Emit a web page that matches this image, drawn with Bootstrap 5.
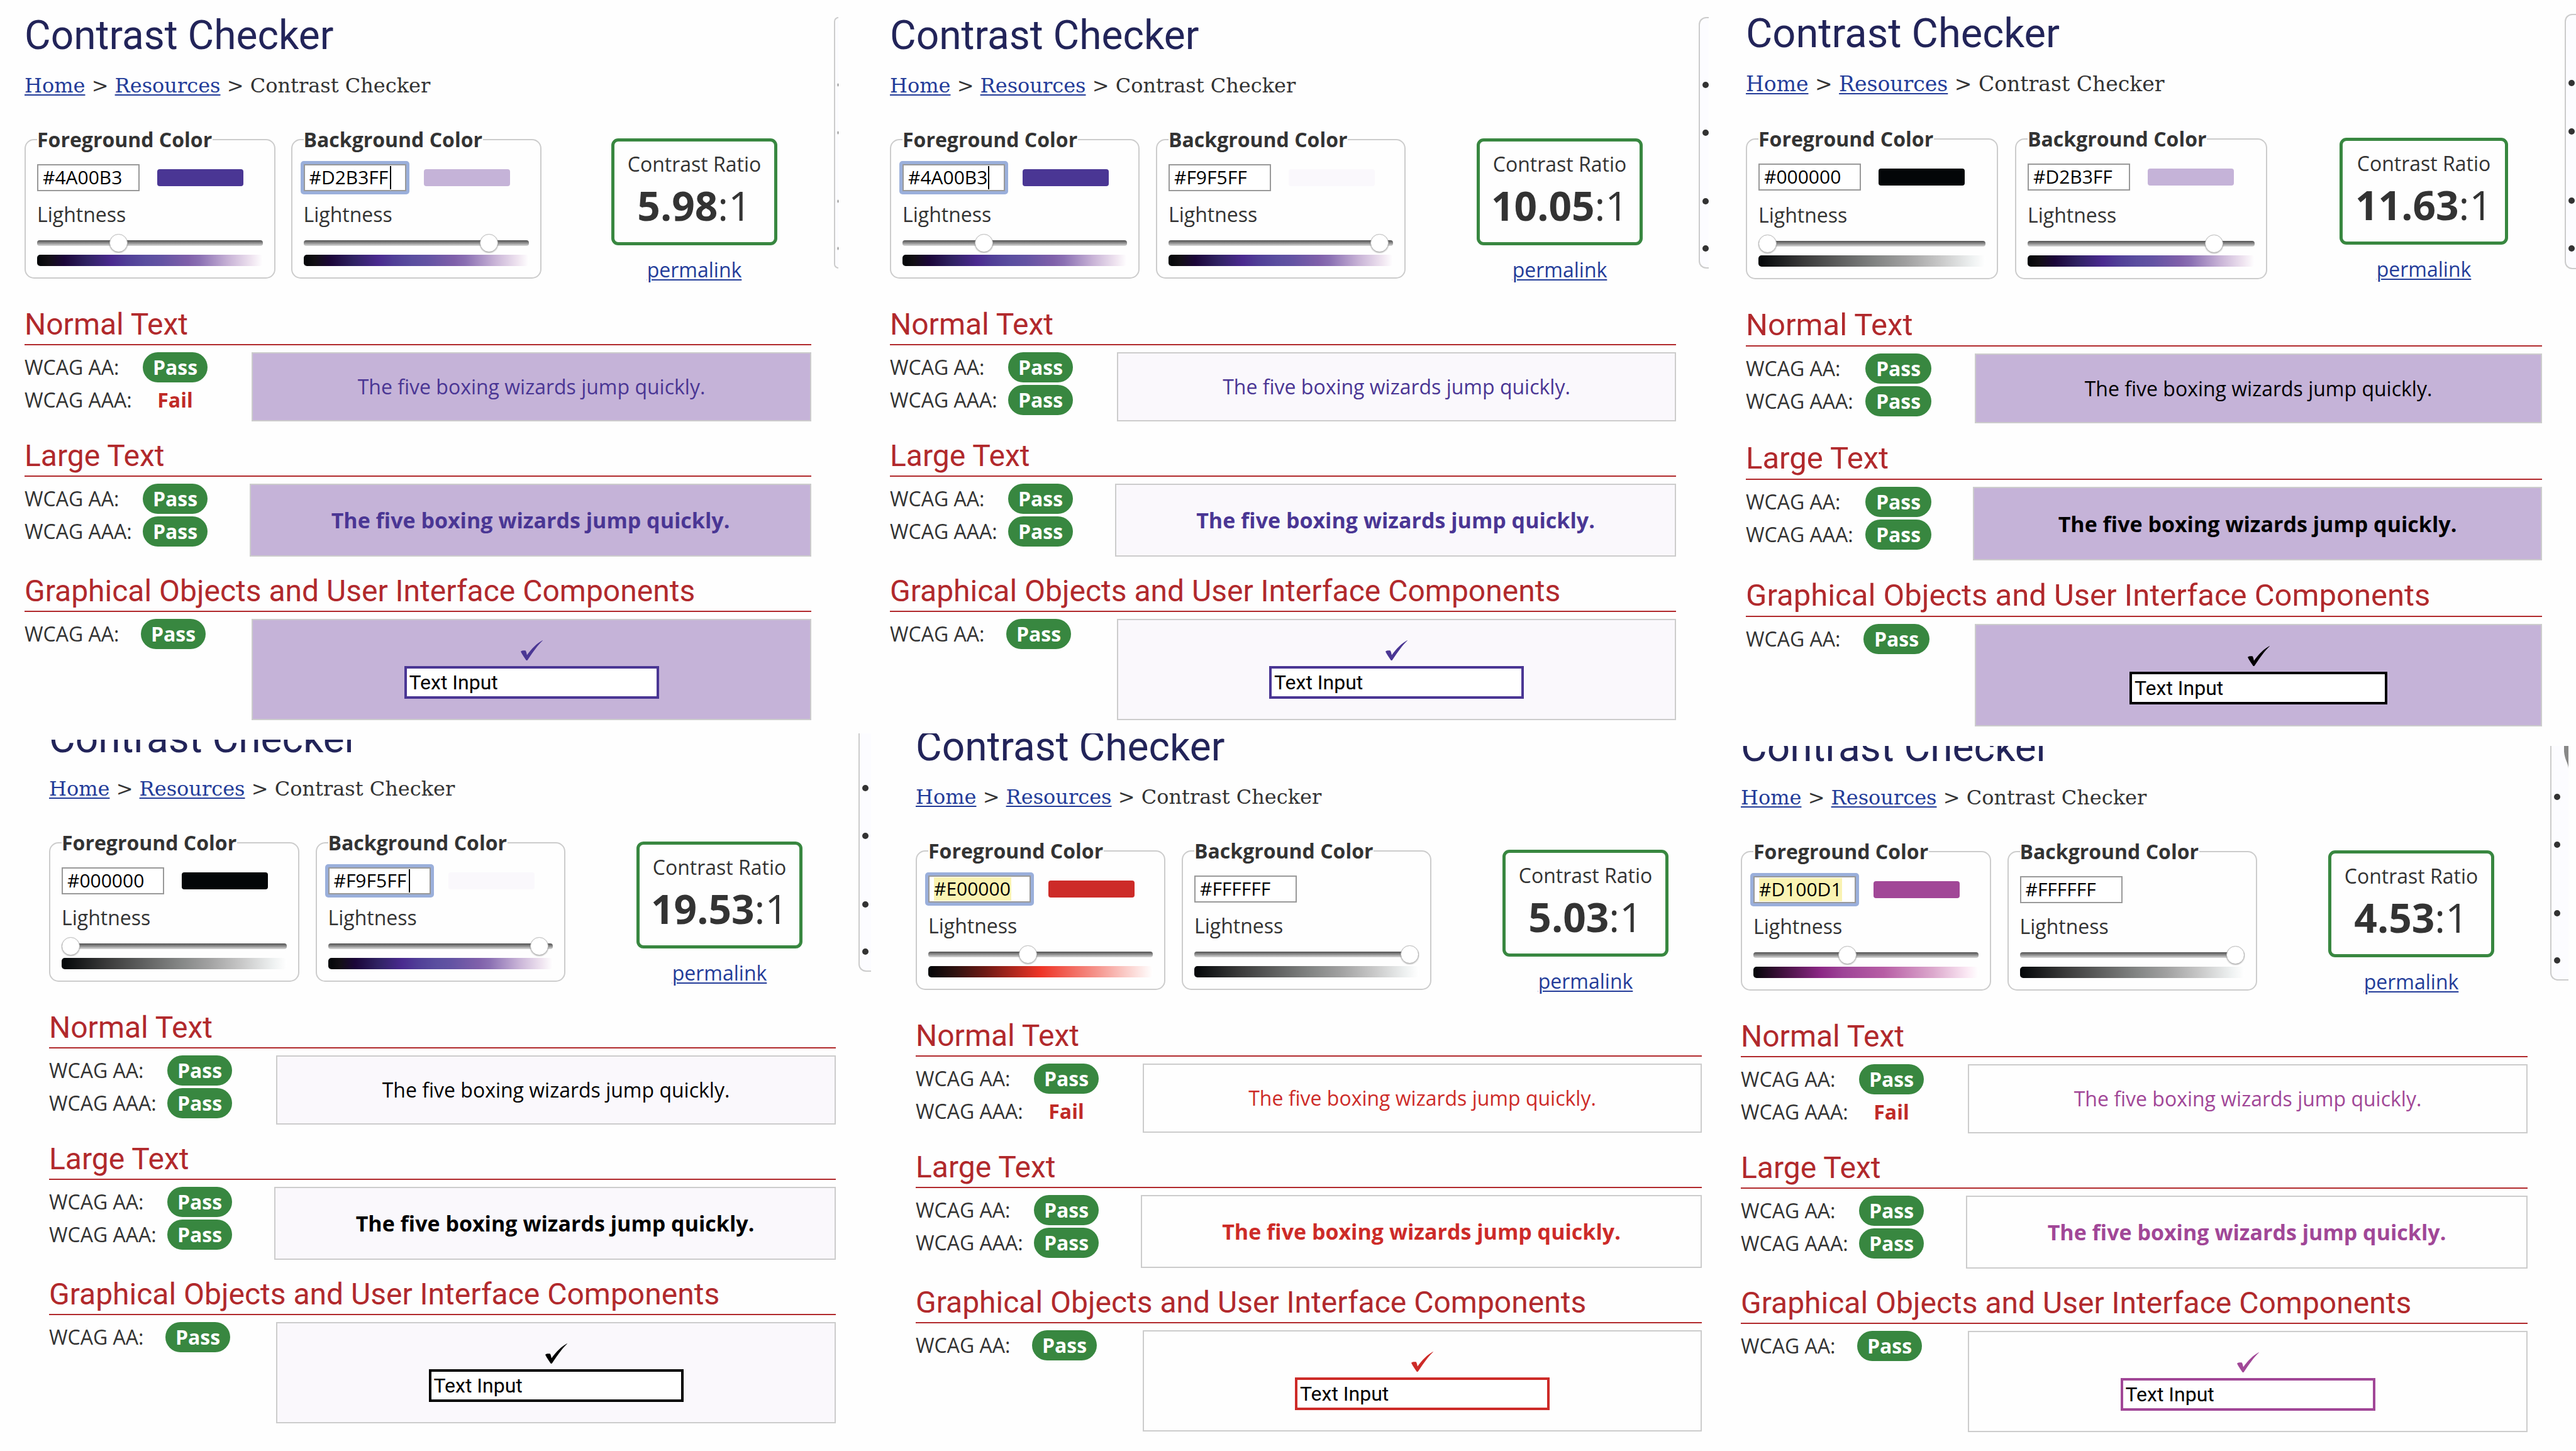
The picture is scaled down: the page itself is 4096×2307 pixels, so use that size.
<!DOCTYPE html>
<html lang="en">
<head>
<meta charset="utf-8">
<meta name="viewport" content="width=device-width, initial-scale=1">
<title>Contrast Checker</title>
<link href="https://cdn.jsdelivr.net/npm/bootstrap@5.3.0/dist/css/bootstrap.min.css" rel="stylesheet">
<style>
  :root {
    --purple: linear-gradient(90deg, #030608, #120f14 5%, #1b0639 12%, #2f2262 22%, #4a2a8f 33%, #503f97 40%, #5a4e9f 48%, #6353a3 55%, #7f60aa 67%, #8b70b3 72%, #c9b4d7 85%, #efe4f0 95%, #fff);
    --gray: linear-gradient(90deg, #030608, #3a3a3a 20%, #838584 52%, #a0a0a0 65%, #c8c8c8 80%, #eef1f1 94%, #fff);
    --red: linear-gradient(90deg, #030608, #2f1210 12%, #6b1914 25%, #ee3426 50%, #f5948c 75%, #fff);
    --magenta: linear-gradient(90deg, #030608, #42113f 13%, #8c2886 30%, #9e4597 40%, #b75ea5 58%, #dca9cd 80%, #fbe9f4 95%, #fff);
  }
  body { font: 32px/44px "Open Sans", "Noto Sans", sans-serif; color: #333; background: #fefefe; overflow-x: hidden; }
  a { color: #233c99; text-decoration-thickness: 2px; text-underline-offset: 3px; }

  .board-top { display: grid; grid-template-columns: 1333fr 1384fr 1379fr; height: 1166px; }
  .board-bottom { display: grid; grid-template-columns: 1385fr 1332fr 1379fr; height: 1141px; }

  .tile {
    --fs-gap: 26px; --ratio-w: 264px; --ratio-left: 87px; --ratio-right: 53px;
    --title: 64px; --crumb: 32px; --sub: 48px; --sub-h: 61px; --crumb-gap: 23px; --field-gap: 44px;
    --light-gap: 15px; --below: 37px; --sect: 27px; --status-w: 361px; --pill-left: 188px; --pill-w: 103px;
    --h-normal: 110px; --h-large: 116px; --h-ui: 161px;
    --dot1: 103px; --dot2: 76px; --dot3: 109px; --dot4: 75px; --aside-h: 400px;
    display: flex; align-items: flex-start; overflow: hidden;
  }
  .tile-wide {
    --fs-gap: 27px; --ratio-w: 268px; --ratio-left: 88px; --ratio-right: 54px;
    --title: 65px; --crumb: 33px; --sub: 49px; --sub-h: 62px; --crumb-gap: 25px; --field-gap: 45px;
    --light-gap: 17px; --below: 39px; --sect: 28px; --status-w: 364px; --pill-left: 190px; --pill-w: 105px;
    --h-normal: 111px; --h-large: 117px; --h-ui: 163px;
    --dot1: 105px; --dot2: 77px; --dot3: 110px; --dot4: 76px; --aside-h: 406px;
  }
  .t1 { padding-left: 39px; --fs-gap: 25px; --ratio-left: 86px; --ratio-right: 54px; --top: 21px; --aside-top: 27px; --aside-w: 7px; }
  .t2 { padding-left: 82px; --top: 21px; --aside-top: 27px; --aside-w: 16px; }
  .t3 { padding-left: 59px; --top: 17px; --aside-top: 22px; --aside-w: 18px; }
  .t4 { padding-left: 78px; --top: -37px; --aside-top: -21px; --aside-w: 20px; }
  .t4 > .checker { margin-top: 10px; }
  .t5 { padding-left: 71px; padding-right: 11px; --top: -14px; }
  .t6 { padding-left: 51px; margin: 20px 12px 0 0; --top: -33px; --aside-top: -27px; --aside-w: 29px; }

  .checker { flex: 1 1 0; min-width: 0; overflow: hidden; }
  .checker h1 { font: 400 var(--title)/72px Roboto, sans-serif; color: #222459; margin: var(--top) 0 var(--crumb-gap); }
  .crumbs { font: var(--crumb)/40px "DejaVu Serif", serif; margin-bottom: var(--field-gap); white-space: nowrap; }

  .controls { display: flex; gap: var(--fs-gap); align-items: flex-start; margin-bottom: var(--below); }
  .picker { flex: 1 1 0; border: 2px solid #ccc; border-radius: 15px; padding: 17px 18px 18px; }
  .picker legend { float: none; width: auto; margin: 0; padding: 0 1px 0 0; font: 700 32px/44px "Open Sans", sans-serif; white-space: nowrap; }
  .hexrow { display: flex; align-items: center; gap: 28px; }
  .hexwrap { position: relative; width: 163px; }
  .hexbox { display: block; width: 100%; height: 43px; padding: 0 0 2px 7px; border: 2px solid #999; border-radius: 0; background: #fff; color: #000; font: 30px/37px "Open Sans", sans-serif; outline: 0; }
  .hexwrap.ring::before { content: ""; position: absolute; inset: -5px; border-radius: 5px; background: #9aafdb; }
  .hexwrap.ring .hexbox { position: relative; }
  .hexbox.picked { background: #fff linear-gradient(#faf3b2, #faf3b2) 7px 1px / var(--pick) 37px no-repeat; }
  .caret { position: absolute; top: 3px; width: 2px; height: 37px; background: #000; }
  .chip { width: 137px; height: 27px; border-radius: 4px; }
  .picker label.lightness { display: block; margin-top: var(--light-gap); }
  .level { display: block; width: 100%; height: 29px; margin: 9px 0 4px; appearance: none; -webkit-appearance: none; background: transparent; }
  .level::-webkit-slider-runnable-track { height: 9px; border-radius: 4px; background: linear-gradient(#505050, #8a8a8a 45%, #dadada); }
  .level::-webkit-slider-thumb { -webkit-appearance: none; width: 29px; height: 29px; margin-top: -10px; border-radius: 50%; background: #fff; border: 1px solid #bbb; box-shadow: 0 1px 2px rgba(0,0,0,.3); }
  .ramp { height: 18px; border-radius: 5px; }

  .verdict { flex: none; width: var(--ratio-w); margin: 20px var(--ratio-right) 0 var(--ratio-left); text-align: center; }
  .verdict-box { border: 5px solid #388740; border-radius: 11px; padding: 14px 0; margin-bottom: 17px; white-space: nowrap; }
  .verdict-num { font-size: 64px; line-height: 88px; }

  .checker h2 { font: 400 var(--sub)/56px Roboto, sans-serif; color: #b1292c; height: var(--sub-h); border-bottom: 2px solid #b1292c; margin: 0 0 11px; white-space: nowrap; }
  .result { display: flex; margin-bottom: var(--sect); }
  .status { width: var(--status-w); flex: none; line-height: 48px; }
  .status dl { display: grid; grid-template-columns: var(--pill-left) var(--pill-w); row-gap: 4px; margin: 0; }
  .status dt { font-weight: 400; white-space: nowrap; }
  .status dd { margin: 0; text-align: center; font-weight: 700; }
  .pass { border-radius: 24px; background: #388740; color: #fff; }
  .fail { color: #c02a26; }
  .sample { flex: 1 1 0; display: flex; flex-direction: column; align-items: center; justify-content: center; border: 2px solid #ccc; height: var(--h-normal); }
  .large .status { margin-right: -3px; }
  .large .sample { height: var(--h-large); font-weight: 700; font-size: 34px; }
  .ui .status dl { grid-template-columns: calc(var(--pill-left) - 3px) var(--pill-w); }
  .ui .sample { height: var(--h-ui); }
  .ui svg { width: 35px; height: 32px; margin-bottom: 9px; fill: currentColor; }
  .demo { width: 405px; height: 52px; border: 4px solid currentColor; border-radius: 0; padding: 0 4px; background: #fff; outline: 0; font: 32px/44px Roboto, sans-serif; color: inherit; -webkit-text-fill-color: #000; }
  .tile-wide .demo { width: 410px; }

  .notes { position: relative; width: var(--aside-w); height: var(--aside-h); margin: var(--aside-top) 0 0 36px; overflow: hidden; border: 2px solid #ccc; border-right: 0; border-radius: 12px 0 0 12px; background: #fcfcff; }
  .notes ul { list-style: none; margin: 0; padding: calc(var(--dot1) - 2px) 0 0 4px; }
  .notes li { height: var(--dot2); }
  .notes li:nth-child(2) { height: var(--dot3); }
  .notes li:nth-child(3) { height: var(--dot4); }
  .notes li::before { content: ""; display: block; width: 10px; height: 10px; border-radius: 50%; background: #333; }
  .notes svg { position: absolute; right: 0; top: 25px; width: 7px; height: 36px; }
</style>
</head>
<body>
<main>
  <div class="board-top" id="top"></div>
  <div class="board-bottom" id="bottom"></div>
</main>
<script src="https://cdn.jsdelivr.net/npm/bootstrap@5.3.0/dist/js/bootstrap.bundle.min.js"></script>
<script>
  const shades = {
    '#4A00B3': { paint: '#4a3694', ramp: 'purple', level: 35, caret: 136 },
    '#D2B3FF': { paint: '#c5b3d8', ramp: 'purple', level: 85, caret: 137 },
    '#F9F5FF': { paint: '#faf8fc', ramp: 'purple', level: 98, caret: 128 },
    '#000000': { paint: '#030608', ramp: 'gray', level: 0 },
    '#FFFFFF': { paint: '#fefefe', ramp: 'gray', level: 100 },
    '#E00000': { paint: '#cd2b28', ramp: 'red', level: 44, pick: 123 },
    '#D100D1': { paint: '#a14797', ramp: 'magenta', level: 41, pick: 132 }
  };
  const panels = [
    { fg: '#4A00B3', bg: '#D2B3FF', ratio: '5.98', active: 'bg', aaa: false },
    { fg: '#4A00B3', bg: '#F9F5FF', ratio: '10.05', active: 'fg', aaa: true },
    { fg: '#000000', bg: '#D2B3FF', ratio: '11.63', aaa: true },
    { fg: '#000000', bg: '#F9F5FF', ratio: '19.53', active: 'bg', aaa: true },
    { fg: '#E00000', bg: '#FFFFFF', ratio: '5.03', active: 'fg', aaa: false },
    { fg: '#D100D1', bg: '#FFFFFF', ratio: '4.53', active: 'fg', aaa: false }
  ];
  const verdict = ok => `<dd class="${ok ? 'pass' : 'fail'}">${ok ? 'Pass' : 'Fail'}</dd>`;
  const picker = (name, key, hex, active, n) => {
    const s = shades[hex];
    return `<fieldset class="picker">
      <legend><label for="${key}${n}">${name} Color</label></legend>
      <div class="hexrow">
        <div class="hexwrap ${active ? 'ring' : ''}">
          <input class="hexbox ${active && s.pick ? 'picked' : ''}" type="text" id="${key}${n}" value="${hex}" ${active && s.pick ? `style="--pick:${s.pick}px"` : ''}>
          ${active && s.caret ? `<span class="caret" style="left:${s.caret}px"></span>` : ''}
        </div>
        <div class="chip" style="background:${s.paint}"></div>
      </div>
      <label class="lightness" for="${key}l${n}">Lightness</label>
      <input class="level" type="range" id="${key}l${n}" min="0" max="100" value="${s.level}">
      <div class="ramp" style="background:var(--${s.ramp})"></div>
    </fieldset>`;
  };
  panels.forEach((p, i) => {
    const n = i + 1, ink = p.fg === '#000000' ? '#000' : shades[p.fg].paint;
    const colors = `style="color:${ink};background:${shades[p.bg].paint}"`;
    const html = `<section class="tile ${n === 3 ? 'tile-wide' : ''} t${n}">
      <div class="checker">
        <h1>Contrast Checker</h1>
        <nav class="crumbs" aria-label="breadcrumb"><a href="#">Home</a> &gt; <a href="#">Resources</a> &gt; Contrast Checker</nav>
        <div class="controls">
          ${picker('Foreground', 'fg', p.fg, p.active === 'fg', n)}
          ${picker('Background', 'bg', p.bg, p.active === 'bg', n)}
          <div class="verdict">
            <div class="verdict-box"><div>Contrast Ratio</div><div class="verdict-num"><b>${p.ratio}</b>:1</div></div>
            <a href="#">permalink</a>
          </div>
        </div>
        <h2>Normal Text</h2>
        <div class="result">
          <div class="status"><dl><dt>WCAG AA:</dt>${verdict(true)}<dt>WCAG AAA:</dt>${verdict(p.aaa)}</dl></div>
          <div class="sample" ${colors}>The five boxing wizards jump quickly.</div>
        </div>
        <h2>Large Text</h2>
        <div class="result large">
          <div class="status"><dl><dt>WCAG AA:</dt>${verdict(true)}<dt>WCAG AAA:</dt>${verdict(true)}</dl></div>
          <div class="sample" ${colors}>The five boxing wizards jump quickly.</div>
        </div>
        <h2>Graphical Objects and User Interface Components</h2>
        <div class="result ui mb-0">
          <div class="status"><dl><dt>WCAG AA:</dt>${verdict(true)}</dl></div>
          <div class="sample" ${colors}>
            <svg viewBox="0 0 117 108" aria-hidden="true"><path d="M0 60C5 55 19 54 26 56C29 62 31 70 33 79C58 46 86 15 117 0V2C90 26 64 66 36 106Q31 110 28 106C18 93 8 78 0 62Z"/></svg>
            <input class="demo" type="text" id="demo${n}" value="Text Input" aria-label="Text Input">
          </div>
        </div>
      </div>
      ${n === 5 ? '' : `<aside class="notes"><ul><li></li><li></li><li></li><li></li></ul>${n === 6 ? '<svg viewBox="0 0 7 36" aria-hidden="true"><path d="M0 0H7V36C7 28 1 22 0 9Z" fill="#888"/></svg>' : ''}</aside>`}
    </section>`;
    document.getElementById(i < 3 ? 'top' : 'bottom').insertAdjacentHTML('beforeend', html);
  });
</script>
</body>
</html>
